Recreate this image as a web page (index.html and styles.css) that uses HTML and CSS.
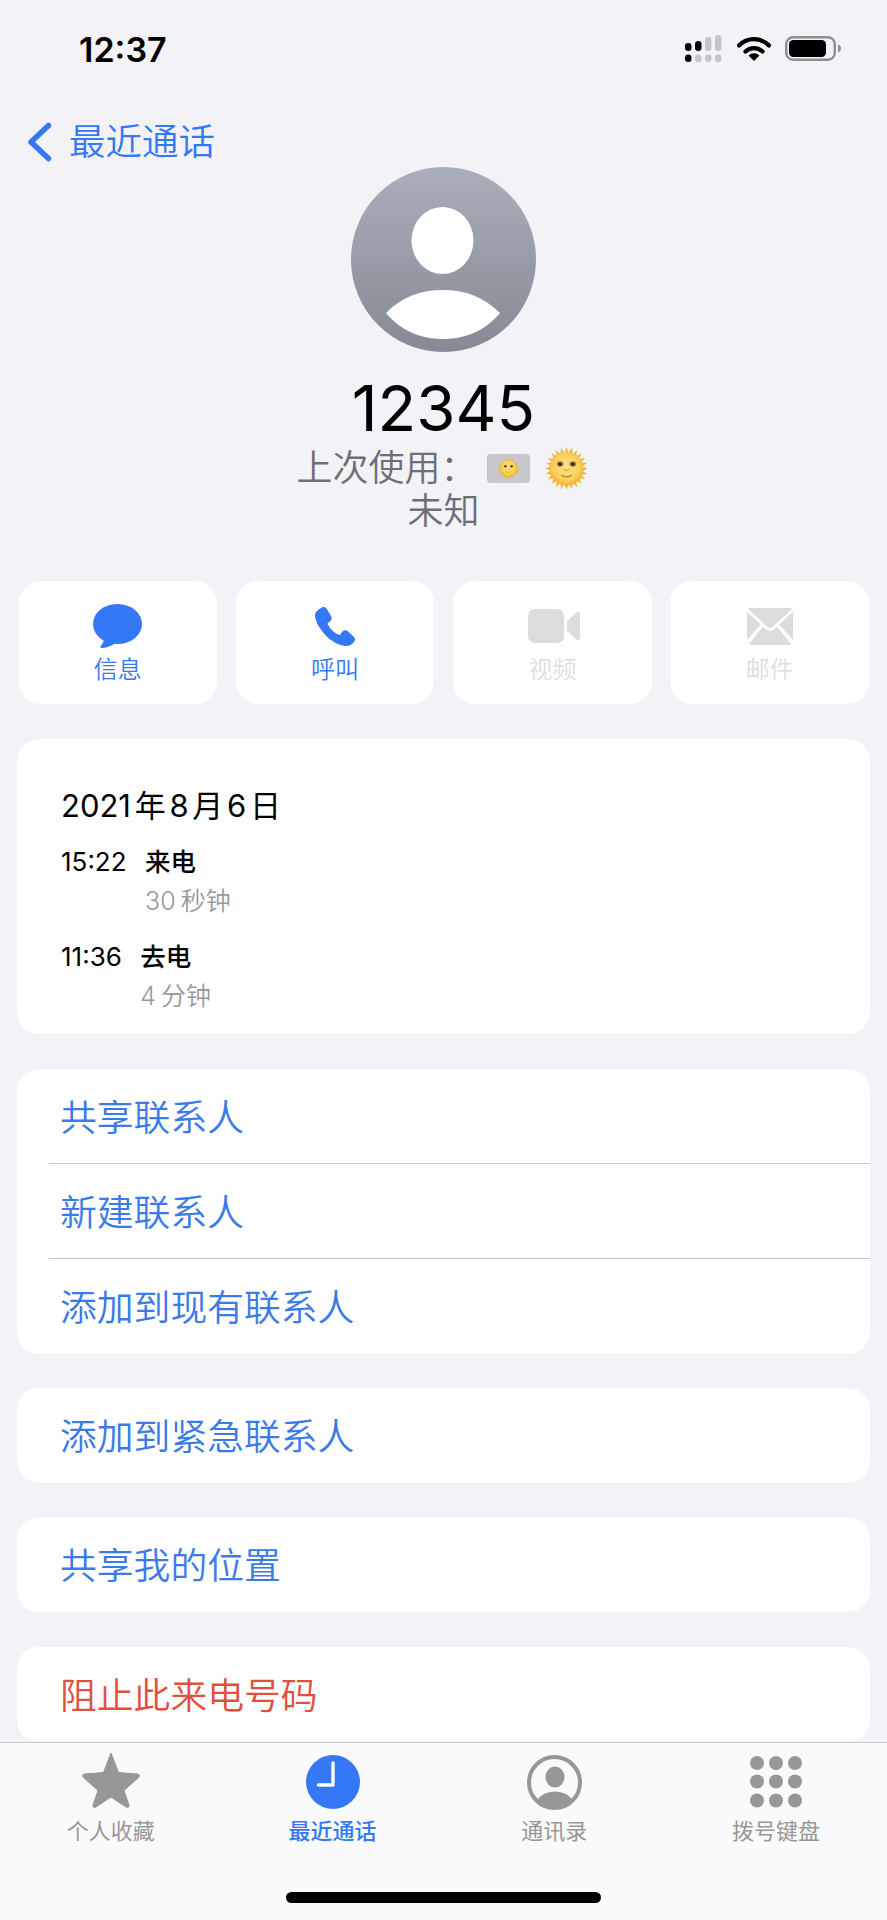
FILE: index.html
```html
<!DOCTYPE html>
<html lang="zh-CN">
<head>
<meta charset="utf-8">
<title>12345</title>
<link rel="stylesheet" href="styles.css">
</head>
<body>
<svg class="defs" width="0" height="0" aria-hidden="true">
  <defs>
    <radialGradient id="sunfill" cx="50%" cy="45%" r="55%">
      <stop offset="0" stop-color="#fde38a"/>
      <stop offset=".7" stop-color="#fbd05a"/>
      <stop offset="1" stop-color="#f3ae32"/>
    </radialGradient>
    <path id="ray" d="M20.300 5.500L22 0l1.700 5.500Z" fill="#f4b030"/>
    <g id="rays6">
      <use href="#ray"/>
      <use href="#ray" transform="rotate(15 22 22)"/>
      <use href="#ray" transform="rotate(30 22 22)"/>
      <use href="#ray" transform="rotate(45 22 22)"/>
      <use href="#ray" transform="rotate(60 22 22)"/>
      <use href="#ray" transform="rotate(75 22 22)"/>
    </g>
  </defs>
  <symbol id="sun" viewBox="0 0 44 44">
    <use href="#rays6"/>
    <use href="#rays6" transform="rotate(90 22 22)"/>
    <use href="#rays6" transform="rotate(180 22 22)"/>
    <use href="#rays6" transform="rotate(270 22 22)"/>
    <circle cx="22" cy="22" r="17.500" fill="url(#sunfill)"/>
    <ellipse cx="15.500" cy="17.500" rx="3.400" ry="2.800" fill="#a07c3c"/>
    <ellipse cx="28.500" cy="17.500" rx="3.400" ry="2.800" fill="#a07c3c"/>
    <circle cx="15.500" cy="17.500" r="1.700" fill="#1e1e1e"/>
    <circle cx="28.500" cy="17.500" r="1.700" fill="#1e1e1e"/>
    <path d="M19.500 23q2.500 2.200 5 0" fill="none" stroke="#e0a53e" stroke-width="1.400" stroke-linecap="round"/>
    <path d="M17 29q5 3 10 0" fill="none" stroke="#b98a34" stroke-width="1.300" stroke-linecap="round"/>
  </symbol>
</svg>
<div class="page">
  <header class="status">
    <span class="time">12:37</span>
    <div class="status-icons">
      <svg class="signal" viewBox="0 0 37 27">
        <rect x="0" y="8" width="6.500" height="8" rx="3.200"/>
        <rect x="10" y="6" width="6.500" height="10" rx="3.200"/>
        <rect class="dim" x="20" y="2" width="6.500" height="14" rx="3.200"/>
        <rect class="dim" x="30" y="0" width="6.500" height="16" rx="3.200"/>
        <rect x="0" y="19.500" width="6.500" height="7.500" rx="3.200"/>
        <rect class="dim" x="10" y="19.500" width="6.500" height="7.500" rx="3.200"/>
        <rect class="dim" x="20" y="19.500" width="6.500" height="7.500" rx="3.200"/>
        <rect class="dim" x="30" y="19.500" width="6.500" height="7.500" rx="3.200"/>
      </svg>
      <svg class="wifi" viewBox="0 0 34 25">
        <path d="M2 9.500A21 21 0 0 1 32 9.500" fill="none" stroke="#000" stroke-width="4.200" stroke-linecap="round"/>
        <path d="M8.500 15.500A12.500 12.500 0 0 1 25.500 15.500" fill="none" stroke="#000" stroke-width="4.200" stroke-linecap="round"/>
        <path d="M17 25L11.500 19.500A7.800 7.800 0 0 1 22.500 19.500Z"/>
      </svg>
      <svg class="battery" viewBox="0 0 56 25">
        <rect x="1.200" y="1.200" width="48.600" height="22.600" rx="7" fill="none" stroke="#8e8e93" stroke-width="2.400"/>
        <rect x="4" y="4" width="37" height="17" rx="4.500"/>
        <path d="M53 8.500c2 .6 3 2.200 3 4s-1 3.400-3 4z" fill="#8e8e93"/>
      </svg>
    </div>
  </header>

  <nav class="nav">
    <svg class="chevron" viewBox="0 0 25 40"><path d="M21.500 3.500L4 20l17.500 16.500" fill="none" stroke="#3478f6" stroke-width="5.500" stroke-linecap="round" stroke-linejoin="round"/></svg>
    <span class="nav-title">最近通话</span>
  </nav>

  <section class="hero">
    <svg class="avatar" viewBox="0 0 185 185">
      <defs><linearGradient id="ag" x1="0" y1="0" x2="0" y2="1"><stop offset="0" stop-color="#a9aeba"/><stop offset="1" stop-color="#858a95"/></linearGradient></defs>
      <circle cx="92.500" cy="92.500" r="92.500" fill="url(#ag)"/>
      <ellipse cx="91.500" cy="73.500" rx="31" ry="33.500" fill="#fff"/>
      <path d="M35 146C50 130 70 123 92 123s41 7 57 23C134 164 114 172 92 172s-42-8-57-26Z" fill="#fff"/>
    </svg>
    <h1 class="name">12345</h1>
    <div class="last-used">
      <span class="last-label">上次使用：</span>
      <span class="sim"><svg class="sun-small"><use href="#sun"/></svg></span>
      <svg class="sun-big"><use href="#sun"/></svg>
    </div>
    <div class="unknown">未知</div>
  </section>

  <section class="actions">
    <div class="action">
      <svg class="i-msg" viewBox="0 0 49 44"><ellipse cx="24.500" cy="20" rx="24.500" ry="20" fill="#3478f6"/><path d="M11 31C11.500 36 10 40 7.500 42C7 43.500 8 44 10 44C14 43.500 18 42 22 39.500Z" fill="#3478f6"/></svg>
      <span class="action-label">信息</span>
    </div>
    <div class="action">
      <svg class="i-phone" viewBox="0 0 40 39"><path d="M6 1C8-.5 10 0 11.500 1.500L16 9C17.300 11.500 16.500 13 15 14.500L12.500 16.500C13.500 19 16 22.500 18.500 24.500C20.500 26.500 22.500 27.500 25 28L27 25C28.500 23 30.500 22.500 32.500 24L38.500 29.500C40.500 31.500 40.500 33.500 38.500 35.500C36.500 38 34 39 31 39C22 38.500 13 32 7 24C2 17.500 0 12 0 8C0 5.500 3 2.500 6 1Z" fill="#3478f6"/></svg>
      <span class="action-label">呼叫</span>
    </div>
    <div class="action off">
      <svg class="i-video" viewBox="0 0 52 34"><rect width="36" height="34" rx="7" fill="#dcdcdc"/><path d="M39 12.500L48 3.800C49.500 2.500 52 3 52 5.500V28.500C52 31 49.500 31.500 48 30.200L39 21.500Z" fill="#dcdcdc"/></svg>
      <span class="action-label">视频</span>
    </div>
    <div class="action off">
      <svg class="i-mail" viewBox="0 0 46 37"><g fill="#dcdcdc"><path d="M2 0H44Q45.500 0 44 2L25.500 19Q23 21 20.500 19L2 2Q.5 0 2 0Z"/><path d="M0 4L14 16.500L0 32Z"/><path d="M46 4L32 16.500L46 32Z"/><path d="M2 36L16 18.500L19 21.500Q23 24.500 27 21.500L30 18.500L44 36Q44 37 42 37H4Q2 37 2 36Z"/></g></svg>
      <span class="action-label">邮件</span>
    </div>
  </section>

  <section class="card history">
    <div class="date">2021 年 8 月 6 日</div>
    <div class="call">
      <span class="call-time">15:22</span>
      <div class="call-info"><div class="call-type">来电</div><div class="call-len">30 秒钟</div></div>
    </div>
    <div class="call">
      <span class="call-time">11:36</span>
      <div class="call-info"><div class="call-type">去电</div><div class="call-len">4 分钟</div></div>
    </div>
  </section>

  <section class="card list">
    <div class="row">共享联系人</div>
    <div class="row">新建联系人</div>
    <div class="row">添加到现有联系人</div>
  </section>
  <section class="card list"><div class="row">添加到紧急联系人</div></section>
  <section class="card list"><div class="row">共享我的位置</div></section>
  <section class="card list"><div class="row danger">阻止此来电号码</div></section>

  <footer class="tabbar">
    <div class="tabs">
      <div class="tab">
        <div class="tab-icon"><svg class="i-star" viewBox="0 0 60 56"><path d="M30 1L37.500 20.500L56.500 22C58.500 22.300 59 24 57.500 25.500L43 38.500L48 53C48.500 55 47 56 45 55L30 45L15 55C13 56 11.500 55 12 53L17 38.500L2.500 25.500C1 24 1.500 22.300 3.500 22L22.500 20.500Z" fill="#979797" stroke="#979797" stroke-linejoin="round" stroke-width="1"/></svg></div>
        <span class="tab-label">个人收藏</span>
      </div>
      <div class="tab on">
        <div class="tab-icon"><svg class="i-clock" viewBox="0 0 54 54"><circle cx="27" cy="27" r="27" fill="#3478f6"/><path d="M27 8V30H12.500" fill="none" stroke="#fff" stroke-width="3.400" stroke-linecap="round" stroke-linejoin="round"/></svg></div>
        <span class="tab-label">最近通话</span>
      </div>
      <div class="tab">
        <div class="tab-icon"><svg class="i-contact" viewBox="0 0 55 55"><circle cx="27.500" cy="27.500" r="25.500" fill="none" stroke="#979797" stroke-width="4"/><ellipse cx="28" cy="22" rx="9.500" ry="10.500" fill="#979797"/><path d="M9.500 46.500C13 40 20 36.500 28 36.500s15 3.500 18 10C41 50.500 35 53 27.500 53S14 50.500 9.500 46.500Z" fill="#979797"/></svg></div>
        <span class="tab-label">通讯录</span>
      </div>
      <div class="tab">
        <div class="tab-icon"><svg class="i-keypad" viewBox="0 0 52 52" fill="#979797"><circle cx="7" cy="7" r="7"/><circle cx="26" cy="7" r="7"/><circle cx="45" cy="7" r="7"/><circle cx="7" cy="25.500" r="7"/><circle cx="26" cy="25.500" r="7"/><circle cx="45" cy="25.500" r="7"/><circle cx="7" cy="44.500" r="7"/><circle cx="26" cy="44.500" r="7"/><circle cx="45" cy="44.500" r="7"/></svg></div>
        <span class="tab-label">拨号键盘</span>
      </div>
    </div>
    <div class="home-bar"></div>
  </footer>
</div>
</body>
</html>
```

FILE: styles.css
```css
* { box-sizing: border-box; }
html, body { margin: 0; padding: 0; }
body {
  background: #f2f2f7;
  font-family: Inter, "Noto Sans CJK SC", sans-serif;
  color: #000;
}
.defs { position: absolute; }
.page {
  position: relative;
  width: 887px;
  height: 1920px;
  overflow: hidden;
  padding: 0 17px;
}

.status {
  height: 99px;
  margin: 0 -17px;
  padding: 0 46px 0 79px;
  display: flex;
  align-items: center;
  justify-content: space-between;
}
.time { font-size: 34px; font-weight: 600; }
.status-icons { display: flex; align-items: center; gap: 15px; margin-top: -2px; }
.signal { width: 37px; height: 27px; }
.signal .dim { fill: #c5c5c8; }
.wifi { width: 34px; height: 25px; margin-right: -1px; }
.battery { width: 56px; height: 25px; }

.nav {
  margin: 18px 0 0 10px;
  height: 50px;
  display: flex;
  align-items: center;
  gap: 17px;
  color: #3478f6;
}
.chevron { width: 25px; height: 40px; }
.nav-title { font-size: 36.500px; line-height: 50px; font-weight: 350; }

.hero { display: flex; flex-direction: column; align-items: center; }
.avatar { width: 185px; height: 185px; display: block; }
.name {
  margin: 17px 0 0;
  font-size: 63.500px;
  font-weight: 400;
  line-height: 78px;
}
.last-used {
  display: flex;
  align-items: center;
  height: 42px;
  margin-right: 3px;
  font-size: 36px;
  font-weight: 350;
  color: #6e6e73;
}
.last-label { margin-bottom: 6px; }
.sim {
  margin-left: 10px;
  width: 43px;
  height: 29px;
  border-radius: 4px;
  background: #c7c7cc;
  display: flex;
  align-items: center;
  justify-content: center;
}
.sun-small { width: 21px; height: 21px; }
.sun-big { width: 43px; height: 43px; margin-left: 15px; }
.unknown { margin-top: 1px; font-size: 36px; line-height: 43px; font-weight: 350; color: #6e6e73; }

.actions {
  margin: 48px 0 0 1.500px;
  display: grid;
  grid-template-columns: repeat(4, 198.500px);
  gap: 18.830px;
}
.action {
  height: 123px;
  background: #fff;
  border-radius: 22px;
  display: flex;
  flex-direction: column;
  align-items: center;
  color: #3478f6;
  position: relative;
}
.action svg { position: absolute; }
.i-msg { width: 49px; height: 44px; top: 23px; }
.i-phone { width: 40px; height: 39px; top: 26px; }
.i-video { width: 52px; height: 34px; top: 28px; margin-left: 4px; }
.i-mail { width: 46px; height: 37px; top: 27px; }
.action-label { margin-top: 71px; font-size: 24px; line-height: 36px; font-weight: 350; }
.action.off { color: #dedede; }

.card {
  margin-top: 34.500px;
  background: #fff;
  border-radius: 22px;
  width: 853px;
  overflow: hidden;
}
.history { padding: 45px 0 19px 44px; height: 295px; }
.history + .list { margin-top: 35.500px; margin-bottom: -1px; }
.date { font-size: 31px; line-height: 44px; word-spacing: -5px; }
.call { display: flex; gap: 18.500px; margin-top: 15px; }
.call + .call { margin-top: 18px; }
.call-time { font-size: 26px; line-height: 38px; }
.call-type { font-size: 25.500px; line-height: 38px; font-weight: 500; }
.call-len { font-size: 25px; line-height: 38px; margin-top: 1px; font-weight: 350; color: #98989d; word-spacing: -2px; }

.row {
  height: 95px;
  padding-left: 43px;
  font-size: 36.800px;
  font-weight: 350;
  line-height: 97px;
  color: #3a7be8;
  position: relative;
}
.row + .row::before {
  content: "";
  position: absolute;
  left: 32px;
  right: 0;
  top: -1px;
  height: 1px;
  background: #c6c6c8;
}
.row.danger { color: #e0503f; }

.tabbar {
  position: absolute;
  left: 0;
  right: 0;
  bottom: 0;
  height: 178px;
  background: #fafafc;
  border-top: 1px solid #c4c4c6;
  padding-top: 10px;
}
.tabs { display: grid; grid-template-columns: repeat(4, 1fr); }
.tab { display: flex; flex-direction: column; align-items: center; color: #979797; }
.tab.on { color: #3478f6; font-weight: 500; }
.tab-icon { height: 58px; display: flex; align-items: center; justify-content: center; }
.i-star { width: 60px; height: 56px; margin-top: -4px; }
.i-clock { width: 54px; height: 54px; }
.i-contact { width: 55px; height: 55px; }
.i-keypad { width: 52px; height: 52px; }
.tab-label { margin-top: 5px; font-size: 22px; line-height: 30px; }
.home-bar {
  margin: 46px auto 0;
  width: 315px;
  height: 11px;
  border-radius: 6px;
  background: #000;
}
```
